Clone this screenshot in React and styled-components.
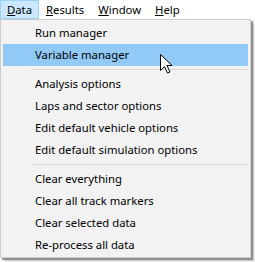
import React from 'react';
import styled, { createGlobalStyle } from 'styled-components';

const GlobalStyle = createGlobalStyle`
  html, body {
    margin: 0;
    padding: 0;
    background: #ffffff;
  }
  body {
    font-family: "Noto Sans", "Open Sans", sans-serif;
    font-size: 11.3px;
    color: #000;
  }
`;

const Screen = styled.div`
  position: relative;
  width: 255px;
  height: 262px;
  overflow: hidden;
  background: #ffffff;
`;

const MenuBar = styled.div`
  display: flex;
  height: 19px;
  background: #ffffff;
`;

const BarItem = styled.div`
  display: flex;
  align-items: center;
  box-sizing: border-box;
  height: 19px;
  padding: 0 6px 1px;
  border: 1px solid ${(p) => (p.$open ? '#99d1ff' : 'transparent')};
  background: ${(p) => (p.$open ? '#cce8ff' : 'transparent')};
  white-space: nowrap;
`;

const Key = styled.span`
  text-decoration: underline;
  text-underline-offset: 1px;
`;

const Menu = styled.div`
  box-sizing: border-box;
  width: 251px;
  padding: 2px 2px 1px 2px;
  background: #f2f2f2;
  border: 1px solid #cccccc;
  box-shadow: 2px 2px 1px rgba(0, 0, 0, 0.35), 4px 4px 2px rgba(0, 0, 0, 0.15);
`;

const Item = styled.div`
  display: flex;
  align-items: center;
  height: 22px;
  padding: 0 0 1px 32px;
  box-sizing: border-box;
  background: ${(p) => (p.$hot ? '#91c9f7' : 'transparent')};
  white-space: nowrap;
`;

const Separator = styled.div`
  height: 7px;
  display: flex;
  align-items: center;
  padding-left: 28px;

  &::after {
    content: '';
    flex: 1;
    height: 1px;
    background: #d7d7d7;
  }
`;

const Pointer = styled.svg`
  position: absolute;
  left: 160px;
  top: 54px;
`;

const groups = [
  ['Run manager', 'Variable manager'],
  ['Analysis options', 'Laps and sector options', 'Edit default vehicle options', 'Edit default simulation options'],
  ['Clear everything', 'Clear all track markers', 'Clear selected data', 'Re-process all data'],
];

export default function App() {
  return (
    <Screen>
      <GlobalStyle />
      <MenuBar>
        <BarItem $open><Key>D</Key>ata</BarItem>
        <BarItem><Key>R</Key>esults</BarItem>
        <BarItem><Key>W</Key>indow</BarItem>
        <BarItem><Key>H</Key>elp</BarItem>
      </MenuBar>
      <Menu>
        {groups.map((g, i) => (
          <React.Fragment key={i}>
            {i > 0 && <Separator />}
            {g.map((label) => (
              <Item key={label} $hot={label === 'Variable manager'}>{label}</Item>
            ))}
          </React.Fragment>
        ))}
      </Menu>
      <Pointer width="13" height="20" viewBox="0 0 13 20">
        <path
          d="M0.5 0.5 L0.5 16.5 L4.5 12.5 L7.5 19 L10 18 L7 11.5 L12 11.5 Z"
          fill="#ffffff"
          stroke="#000000"
          strokeWidth="1"
          strokeLinejoin="miter"
        />
      </Pointer>
    </Screen>
  );
}
